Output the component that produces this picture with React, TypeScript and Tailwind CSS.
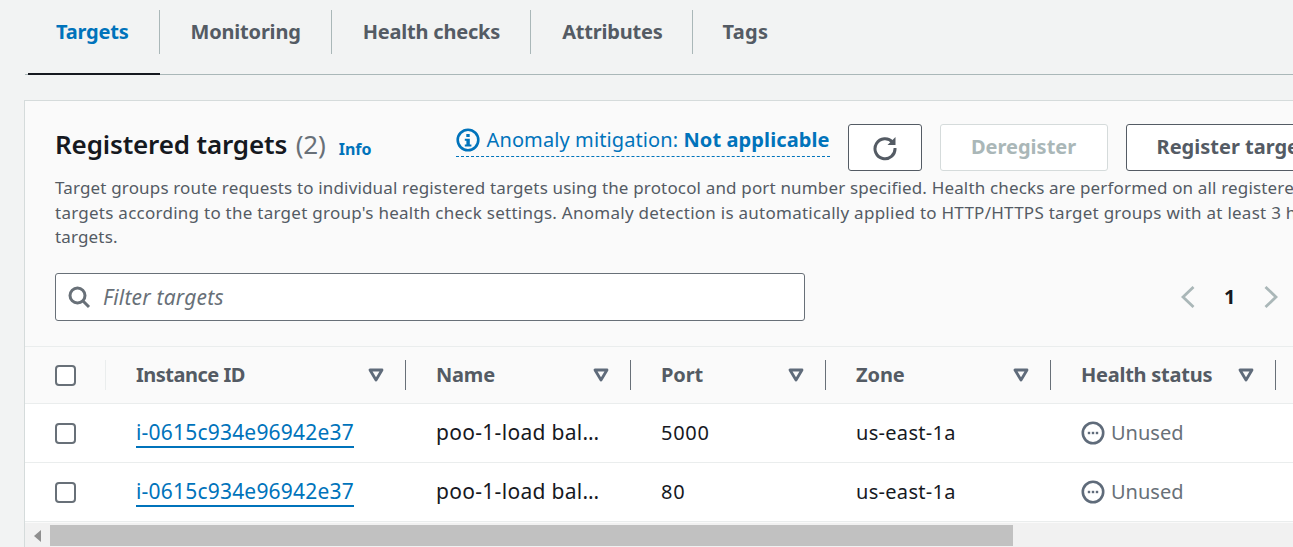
const tabs = ["Targets", "Monitoring", "Health checks", "Attributes", "Tags"];

const columns = [
  { label: "Instance ID", width: "w-[300px]", track: "tracking-[-0.5px]" },
  { label: "Name", width: "w-[225px]", track: "tracking-[-0.2px]" },
  { label: "Port", width: "w-[195px]", track: "tracking-[-0.1px]" },
  { label: "Zone", width: "w-[225px]", track: "tracking-[-0.1px]" },
  { label: "Health status", width: "w-[225px]", track: "tracking-[-0.25px]" },
];

const rows = [
  { id: "i-0615c934e96942e37", name: "poo-1-load bal…", port: "5000", zone: "us-east-1a" },
  { id: "i-0615c934e96942e37", name: "poo-1-load bal…", port: "80", zone: "us-east-1a" },
];

function Checkbox() {
  return <span className="block size-[21px] rounded-[4px] border-2 border-[#687078] bg-white" />;
}

function SortIcon() {
  return (
    <svg width="16" height="16" viewBox="0 0 16 16" aria-hidden="true" className="shrink-0">
      <path d="M2 3h12L8 13z" fill="none" stroke="#5f6b7a" strokeWidth="2.8" strokeLinejoin="round" />
    </svg>
  );
}

function UnusedIcon() {
  return (
    <svg width="24" height="24" viewBox="0 0 24 24" aria-hidden="true" className="shrink-0">
      <circle cx="12" cy="12" r="10.2" fill="none" stroke="#5f6b7a" strokeWidth="2.6" />
      <rect x="6.8" y="10.8" width="2.4" height="2.4" fill="#5f6b7a" />
      <rect x="10.8" y="10.8" width="2.4" height="2.4" fill="#5f6b7a" />
      <rect x="14.8" y="10.8" width="2.4" height="2.4" fill="#5f6b7a" />
    </svg>
  );
}

export default function App() {
  return (
    <div className="h-[547px] w-[1293px] overflow-hidden bg-[#f2f3f3] pl-[24px] font-['Noto_Sans',sans-serif]">
      {/* Tabs */}
      <div className="ml-px flex h-[75px] w-[1400px] border-b border-[#aab7b8] pl-[3px]">
        {tabs.map((tab, i) => (
          <div
            key={tab}
            className={`flex h-[75px] items-start pt-[10px] ${i === 0 ? "-mb-px border-b-2 border-[#16191f]" : ""}`}
          >
            <div
              className={`flex h-[44px] items-center whitespace-nowrap text-[20px] font-bold leading-[24px] ${
                i === 4 ? "tracking-[0.3px]" : "tracking-[-0.2px]"
              } ${
                i === 0 ? "pl-[28px] text-[#0073bb]" : i === 4 ? "pl-[30px] text-[#545b64]" : "pl-[31px] text-[#545b64]"
              } ${i === 3 ? "pr-[29px]" : "pr-[30px]"} ${i < tabs.length - 1 ? "border-r border-[#aab7b8]" : ""}`}
            >
              {tab}
            </div>
          </div>
        ))}
      </div>

      {/* Card */}
      <div className="mt-[25px] w-[1400px] border-l border-t border-[#d5dbdb] bg-[#fafafa]">
        <div className="h-[245px] pl-[30px] pt-[21px]">
          <div className="flex h-[49px] items-start">
            <h2 className="whitespace-nowrap text-[26px] font-semibold leading-[44px] tracking-[-0.15px] text-[#16191f]">
              Registered targets <span className="ml-[2px] font-normal text-[#687078]">(2)</span>
            </h2>
            <a className="ml-[13px] mt-[15px] text-[16px] font-bold leading-[24px] text-[#0073bb]">Info</a>
            <div className="ml-[84px] mt-px flex h-[34px] items-center gap-[7px] whitespace-nowrap border-b border-dashed border-[#0073bb] text-[20px] leading-[24px] tracking-[0.1px] text-[#0073bb]">
              <svg width="24" height="24" viewBox="0 0 24 24" aria-hidden="true" className="shrink-0">
                <circle cx="12" cy="12" r="10.3" fill="none" stroke="#0073bb" strokeWidth="2.6" />
                <rect x="10.3" y="6" width="3.4" height="3" fill="#0073bb" />
                <path d="M8.8 10.8h5v5.6h1.6v2H8.8v-2h1.6v-3.6H8.8z" fill="#0073bb" />
              </svg>
              <span>
                Anomaly mitigation: <b>Not applicable</b>
              </span>
            </div>
            <button className="ml-[18px] mt-[2px] flex h-[47px] w-[74px] items-center justify-center rounded-[3px] border border-[#545b64] bg-white">
              <svg width="26" height="26" viewBox="0 0 26 26" fill="none" aria-hidden="true">
                <path d="M20.6 7.2A10 10 0 1 0 23 13" stroke="#545b64" strokeWidth="3" />
                <path d="M23.5 2v8h-8z" fill="#545b64" />
              </svg>
            </button>
            <button className="ml-[18px] mt-[2px] h-[47px] w-[168px] rounded-[3px] border border-[#d5dbdb] bg-white pb-[2px] text-[20px] font-bold text-[#aab7b8]">
              Deregister
            </button>
            <button className="ml-[18px] mt-[2px] h-[47px] w-[190px] whitespace-nowrap rounded-[3px] border border-[#545b64] bg-white pb-[2px] pl-[30px] text-left text-[20px] font-bold text-[#545b64]">
              Register targets
            </button>
          </div>
          <p className="mt-[5px] w-[1300px] text-[17px] leading-[24.5px] tracking-[0.16px] text-[#545b64]">
            Target groups route requests to individual registered targets using the protocol and port number specified. Health checks are performed on all registered
            <br />
            <span className="tracking-[0.26px]">
              targets according to the target group's health check settings. Anomaly detection is automatically applied to HTTP/HTTPS target groups with at least 3 healthy
            </span>
            <br />
            targets.
          </p>
          <div className="mt-[23px] flex items-center">
            <div className="flex h-[48px] w-[750px] items-center gap-[12px] rounded-[3px] border border-[#687078] bg-white pl-[11px]">
              <svg width="24" height="24" viewBox="0 0 24 24" fill="none" aria-hidden="true">
                <circle cx="10.5" cy="10.5" r="7.5" stroke="#687078" strokeWidth="3" />
                <path d="M16 16l6 6" stroke="#687078" strokeWidth="3" />
              </svg>
              <span className="pt-[2px] text-[21px] italic tracking-[0.2px] text-[#687078]">Filter targets</span>
            </div>
            <svg width="14" height="22" viewBox="0 0 14 22" fill="none" aria-hidden="true" className="ml-[376px]">
              <path d="M12.5 1 2 11l10.5 10" stroke="#aab7b8" strokeWidth="2.8" />
            </svg>
            <span className="ml-[29px] text-[20px] font-bold text-[#16191f]">1</span>
            <svg width="14" height="22" viewBox="0 0 14 22" fill="none" aria-hidden="true" className="ml-[29px]">
              <path d="M1.5 1 12 11 1.5 21" stroke="#aab7b8" strokeWidth="2.8" />
            </svg>
          </div>
        </div>

        {/* Table */}
        <div className="flex h-[58px] border-y border-[#eaeded] bg-[#fafafa]">
          <div className="flex w-[81px] items-center pl-[30px]">
            <Checkbox />
            <span className="ml-auto h-[30px] w-px bg-[#eaeded]" />
          </div>
          {columns.map((c) => (
            <div key={c.label} className={`flex items-center pl-[30px] ${c.width}`}>
              <span className={`whitespace-nowrap text-[20px] font-bold text-[#545b64] ${c.track}`}>{c.label}</span>
              <span className="ml-auto mr-[21px]">
                <SortIcon />
              </span>
              <span className="h-[30px] w-px bg-[#687078]" />
            </div>
          ))}
        </div>
        {rows.map((r) => (
          <div key={r.port} className="flex h-[59px] items-center border-b border-[#eaeded] bg-white text-[20px] text-[#16191f]">
            <div className="w-[81px] pl-[30px]">
              <Checkbox />
            </div>
            <div className="w-[300px] pl-[30px]">
              <a className="border-b-2 border-[#0073bb] text-[21px] tracking-[0.2px] text-[#0073bb]">{r.id}</a>
            </div>
            <div className="w-[225px] pl-[30px] text-[21px] tracking-[0.3px]">{r.name}</div>
            <div className="w-[195px] pl-[30px] tracking-[0.7px]">{r.port}</div>
            <div className="w-[225px] pl-[30px] tracking-[0.3px]">{r.zone}</div>
            <div className="flex w-[225px] items-center gap-[6px] pl-[30px] text-[#687078]">
              <UnusedIcon />
              Unused
            </div>
          </div>
        ))}

        {/* Scrollbar */}
        <div className="mt-px flex h-[25px] items-center bg-[#f1f1f1] pl-[9px]">
          <svg width="7" height="12" viewBox="0 0 7 12" aria-hidden="true">
            <path d="M7 0v12L0 6z" fill="#8f8f8f" />
          </svg>
          <div className="ml-[9px] h-[21px] w-[963px] bg-[#c1c1c1]" />
        </div>
      </div>
    </div>
  );
}
